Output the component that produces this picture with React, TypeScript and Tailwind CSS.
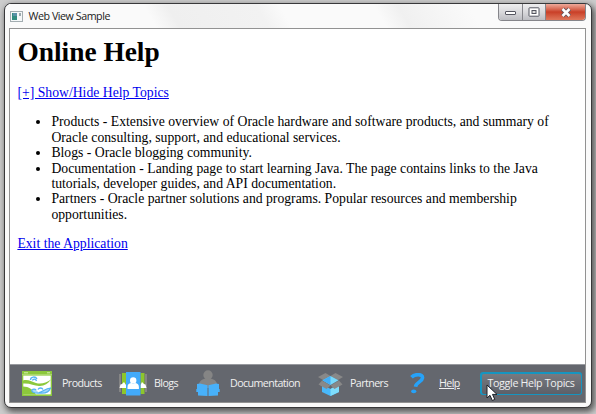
import type { ReactNode } from 'react';

const topics = [
  ['Products - Extensive overview of Oracle hardware and software products, and summary of', 'Oracle consulting, support, and educational services.'],
  ['Blogs - Oracle blogging community.'],
  ['Documentation - Landing page to start learning Java. The page contains links to the Java', 'tutorials, developer guides, and API documentation.'],
  ['Partners - Oracle partner solutions and programs. Popular resources and membership', 'opportunities.'],
];

function ProductsIcon() {
  return (
    <svg width="30" height="25" viewBox="0 0 30 25">
      <rect width="30" height="25" fill="#8cc83c" />
      <rect x="1.3" y="4.6" width="27.4" height="18.8" fill="#fff" />
      <path d="M0 3.700h30" stroke="#b9df84" strokeWidth=".8" />
      <path d="M2 1.800h4M25 1.800h3" stroke="#d4edae" strokeWidth="1" />
      <path d="M1 9.500C6 8 9 10.500 14 12S24 12 29 8.500C26 13 22 15.300 17 15S8 12 1 12.500Z" fill="#8cc83c" />
      <path d="M1 15.500c6 0 10 3 13 8H1Z" fill="#8cc83c" />
      <path d="M8.500 9c0-3.500 5-4 6.500-1M10.500 9.500c.5-2 3.500-2 4 .5" stroke="#54b4f3" strokeWidth="1.300" fill="none" />
      <path d="M17 21.500c4-.5 6-4 11.500-4.500-1.500 4-6 5.500-10.500 5-5 .5-9-1-8-3 1-1.500 4-1 4 .3" stroke="#54b4f3" strokeWidth="1.200" fill="#a5d9fa" />
      <path d="M16 18.500c1-2 4-2 5 0" stroke="#54b4f3" strokeWidth="1.300" fill="none" />
    </svg>
  );
}

function BlogsIcon() {
  return (
    <svg width="28" height="25" viewBox="0 0 28 25">
      <path d="M0 3h2v18H0ZM26 3h2v18h-2Z" fill="#858585" />
      <path d="M3 2h4v21H3ZM21.500 2h4v21h-4Z" fill="#8dc62c" />
      <path d="M.5 17l1-3.500 1.500-.5 2-2 2 3v3ZM27.500 17l-1-3.500-1.500-.5-2-2-1.500 3v3Z" fill="#fff" />
      <rect x="7" y="1" width="14.500" height="23.500" fill="#42aafa" />
      <circle cx="14.200" cy="9.500" r="3.200" fill="#fff" />
      <path d="M8.500 18v-2c0-3 2-4 4-4l1.700 1 1.700-1c2 0 4 1 4 4v2Z" fill="#fff" />
    </svg>
  );
}

function DocumentationIcon() {
  return (
    <svg width="24" height="27" viewBox="0 0 24 27" className="-mt-px">
      <circle cx="12" cy="5" r="4.700" fill="#858585" />
      <path d="M3 14c1-4 4-5.500 9-5.500s8 1.500 9 5.500v4H3Z" fill="#858585" />
      <path d="M1 14l3-.5 7.500 1.700v10.800L2 25.500V22H.3v-3H1ZM23 14l-3-.5-7.500 1.700v10.800l9.500-.5V22h1.700v-3H23Z" fill="#48b1fa" />
    </svg>
  );
}

function PartnersIcon() {
  return (
    <svg width="25" height="24" viewBox="0 0 25 24">
      <path d="M4 12l8.500 5 8.500-5v8l-8.500 4L4 20Z" fill="#48b8fa" />
      <path d="M12.500 17l8.500-5v8l-8.500 4Z" fill="#7eddfc" />
      <path d="M0 5L7.500 1l5 3L5 8ZM25 5l-7.500-4-5 3L20 8ZM4 8.500l8.500 5-4 3.500L.5 12.500ZM21 8.500l-8.500 5 4 3.500 8-4.500Z" fill="#888" />
      <path d="M4.500 8.300l8-4.200 8 4.200-8 4.700Z" fill="#79d9fb" />
      <path d="M12.500 4.100v8.900l-8-4.700Z" fill="#42aef7" />
    </svg>
  );
}

function HelpIcon() {
  return (
    <svg width="15" height="21" viewBox="0 0 15 21">
      <path d="M1.500 4.200C4.500 1 13 .3 12.500 5c-.5 4-6.500 4.300-7 8.700" fill="none" stroke="#26a2f8" strokeWidth="3.600" />
      <ellipse cx="3.700" cy="18.300" rx="2.600" ry="1.900" fill="#26a2f8" />
    </svg>
  );
}

function Item({ label, className, children, underline = false }: { label: string; className: string; children: ReactNode; underline?: boolean }) {
  return (
    <div className={`flex h-full shrink-0 items-center ${className}`}>
      {children}
      <span className={`whitespace-nowrap ${underline ? 'underline' : ''}`}>{label}</span>
    </div>
  );
}

function Toolbar() {
  return (
    <div className="relative flex h-[38px] shrink-0 items-center border-t border-[#989a9f] bg-[#64676e] pl-3 font-['Open_Sans','Noto_Sans',sans-serif] text-[10.700px] tracking-[-0.58px] text-[#f0f0f0]">
      <Item label="Products" className="w-[97px] gap-[10px]"><ProductsIcon /></Item>
      <Item label="Blogs" className="w-[77px] gap-[7px]"><BlogsIcon /></Item>
      <Item label="Documentation" className="w-[122px] gap-[10px]"><DocumentationIcon /></Item>
      <Item label="Partners" className="w-[92px] gap-[7px]"><PartnersIcon /></Item>
      <Item label="Help" className="w-[70px] gap-[14px]" underline><HelpIcon /></Item>
      <div className="flex h-[23px] w-[102px] shrink-0 items-center rounded-[3px] bg-[#1695c0] p-[1.500px]">
        <button className="flex h-full w-full items-center justify-center rounded-[2px] bg-gradient-to-b from-[#787a80] to-[#5d6068] whitespace-nowrap tracking-[-0.33px]">Toggle Help Topics</button>
      </div>
      <svg className="absolute top-[19px] left-[476px]" width="12" height="18" viewBox="0 0 12 18">
        <path d="M1 1v13l3-2.700 2.300 5.200 2.500-1.100-2.300-5H11Z" fill="#fff" stroke="#1d2026" strokeWidth="1" />
      </svg>
    </div>
  );
}

function WindowControls() {
  return (
    <div className="flex h-[17px] w-[88px] overflow-hidden rounded-b-[4px] border border-t-0 border-[#85858a]">
      <div className="flex w-6 items-center justify-center border-r border-[#85858a] bg-gradient-to-b from-[#eeeeef] via-[#d9d9dc] to-[#bdbec3]">
        <svg width="13" height="7" viewBox="0 0 13 7"><rect x="1.500" y="2.500" width="10" height="3" rx=".5" fill="#fff" stroke="#555660" /></svg>
      </div>
      <div className="flex w-[23px] items-center justify-center border-r border-[#85858a] bg-gradient-to-b from-[#eeeeef] via-[#d9d9dc] to-[#bdbec3]">
        <svg width="12" height="10" viewBox="0 0 12 10"><rect x="1" y=".8" width="10" height="8.400" rx=".5" fill="#fff" stroke="#555660" /><rect x="4" y="3.500" width="4" height="3" fill="#ddd" stroke="#555660" /></svg>
      </div>
      <div className="flex flex-1 items-center justify-center bg-gradient-to-b from-[#edaa9b] via-[#c93f27] to-[#df765a]">
        <svg width="12" height="11" viewBox="0 0 12 11"><path d="M2.500 2l7 7M9.500 2l-7 7" stroke="#66565d" strokeWidth="4.400" /><path d="M2.500 2l7 7M9.500 2l-7 7" stroke="#fff" strokeWidth="2.500" /></svg>
      </div>
    </div>
  );
}

export default function App() {
  return (
    <div className="h-[414px] w-[596px] overflow-hidden bg-[#cdcdcd] pt-[3px] pl-1">
      <div className="flex h-[405px] w-[588px] flex-col rounded-[7px] border-[1.5px] border-[#38383a] bg-[#fafafa] pr-[5px] pl-[4px] shadow-[2px_3px_6px_1px_#555]">
        <header className="flex h-[24px] shrink-0 justify-between bg-[linear-gradient(60deg,#fafafa_0%,#fafafa_25%,#efefef_29%,#f2f2f2_44%,#fafafa_48%,#fafafa_64%,#f0f0f0_68%,#fafafa_80%)] pl-px">
          <div className="flex items-center pt-px">
            <svg width="13" height="11" viewBox="0 0 13 11"><rect x=".5" y=".5" width="12" height="10" fill="#f5f8f9" stroke="#a3adb1" /><rect x="2" y="2" width="5" height="7" fill="#328c80" /><path d="M3 2h4v3H3Z" fill="#5a91a8" /><path d="M9 2h2v3H9Z" fill="#9caaae" /></svg>
            <span className="ml-[5.500px] font-['Open_Sans','Noto_Sans',sans-serif] text-[10.700px] tracking-[-0.45px] whitespace-nowrap text-[#202020]">Web View Sample</span>
          </div>
          <WindowControls />
        </header>
        <main className="flex h-[375px] w-[577px] shrink-0 flex-col border border-[#929292] bg-white">
          <article className="h-[335px] shrink-0 pl-[7.400px] font-['Liberation_Serif',serif] text-[13.710px] leading-[15.400px] text-black">
            <h1 className="pt-[7px] text-[27.400px] leading-[32px] font-bold">Online Help</h1>
            <a href="#" className="mt-[17px] block w-max text-[#0000ee] underline">[+] Show/Hide Help Topics</a>
            <ul className="mt-[14px] list-disc pl-[34px]">
              {topics.map((lines) => (
                <li key={lines[0]}>
                  {lines.map((line) => <span className="block whitespace-nowrap" key={line}>{line}</span>)}
                </li>
              ))}
            </ul>
            <a href="#" className="mt-[13.500px] block w-max text-[#0000ee] underline">Exit the Application</a>
          </article>
          <Toolbar />
        </main>
      </div>
    </div>
  );
}
